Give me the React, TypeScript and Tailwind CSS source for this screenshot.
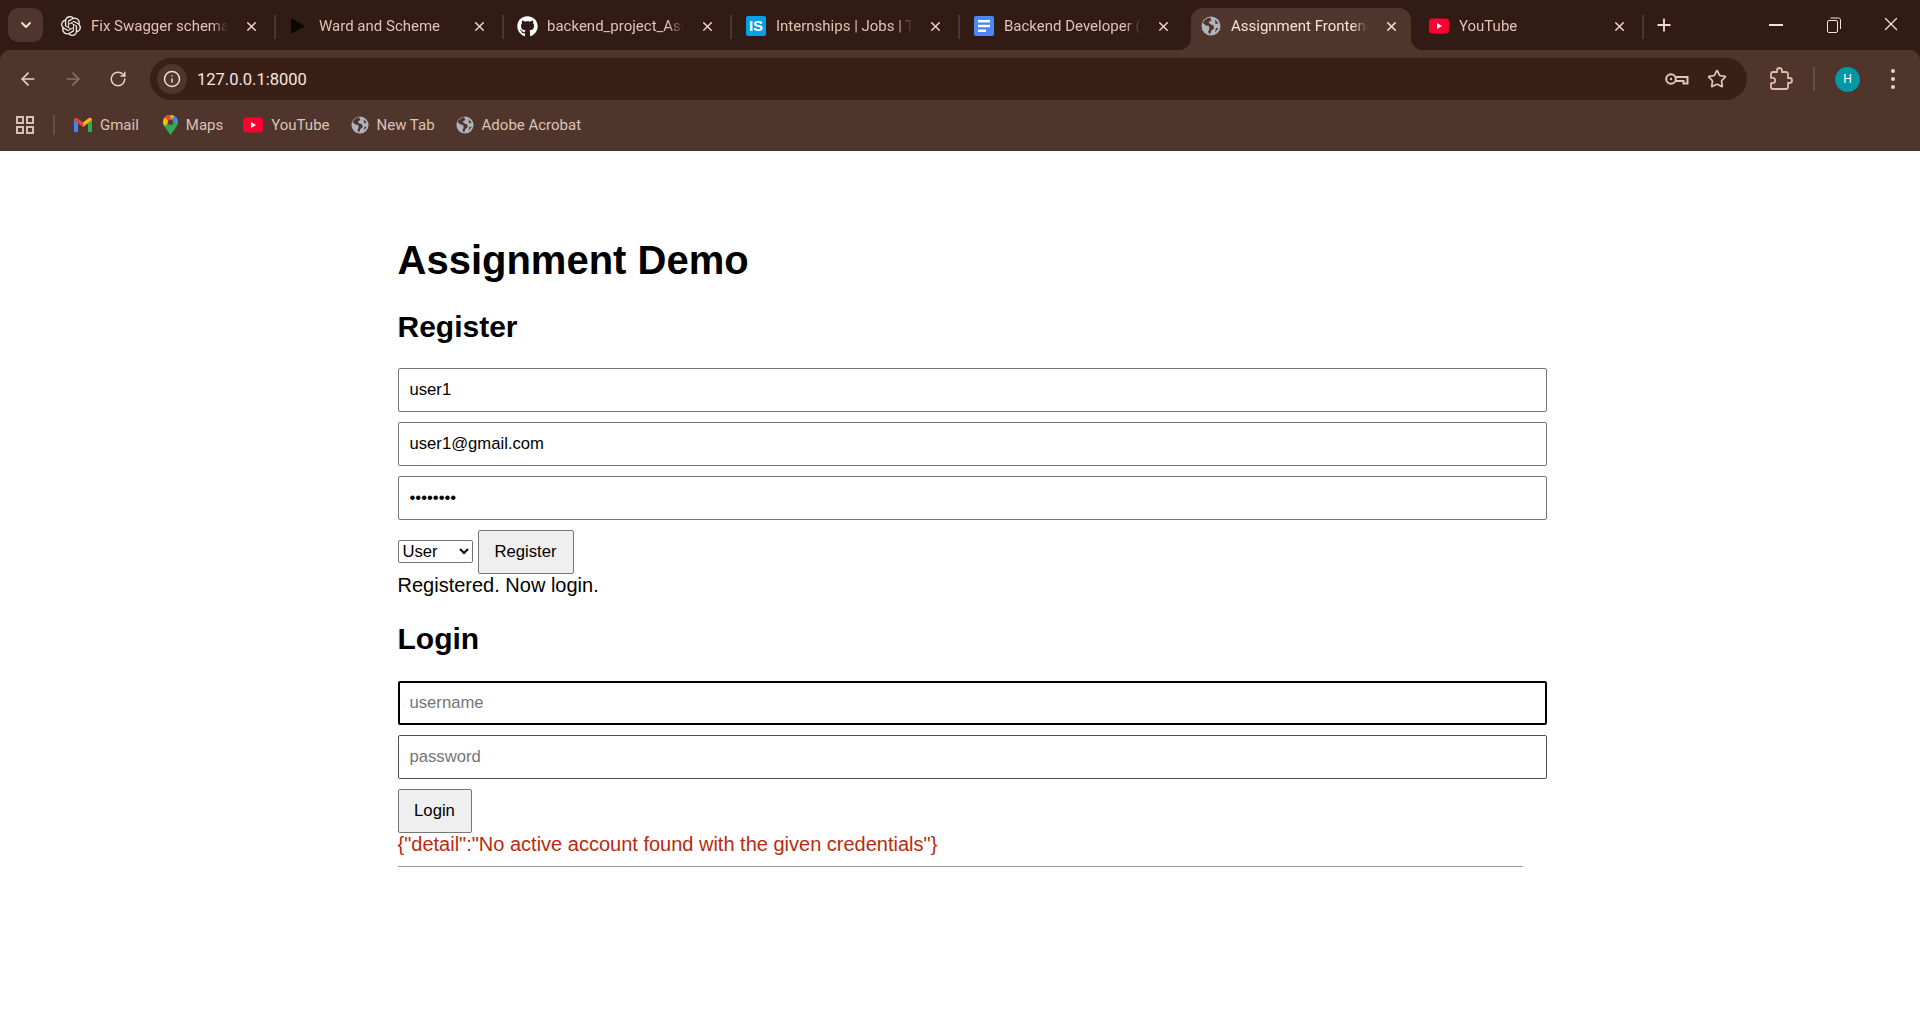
import React from 'react';
import { ArrowLeft, ArrowRight, RotateCw, Info, Star, Plus, X, ChevronDown } from 'lucide-react';
import { FaGithub } from 'react-icons/fa';
import { SiOpenai } from 'react-icons/si';

const Globe = ({ size = 20 }: { size?: number }) => (
  <svg width={size} height={size} viewBox="0 0 20 20" className="shrink-0">
    <circle cx="10" cy="10" r="9.5" fill="#aeb4ba" />
    <path d="M9 1.5 C5.5 2 3 4 1.8 7 L5 9.5 L8 10 L8.5 13 L7 16 L9 18.3 L10.5 14.5 L13 12.5 L12.5 9.5 L9 8 L7.5 6 L10.5 4.5 Z" fill="#4f352b" />
    <path d="M14 3.5 L17.5 7.5 L14.5 8 Z M15 12 L17.5 12 L14 16.5 Z" fill="#4f352b" />
  </svg>
);

const YouTubeIcon = () => (
  <svg width="20" height="20" viewBox="0 0 20 20" className="shrink-0">
    <rect x="0" y="2.5" width="20" height="15" rx="3.5" fill="#ff0033" />
    <path d="M8 7 L13 10 L8 13 Z" fill="#fff" />
  </svg>
);

const PlayIcon = () => (
  <svg width="20" height="20" viewBox="0 0 20 20" className="shrink-0">
    <path d="M2 2 L16 10 L2 18 Z" fill="#0b0705" />
  </svg>
);

const InternshalaIcon = () => (
  <div className="w-5 h-[20px] shrink-0 rounded-[2px] bg-[#03a1e6] text-white text-[15px] font-bold leading-[20px] text-center font-['Liberation_Sans',sans-serif]">
    IS
  </div>
);

const DocsIcon = () => (
  <svg width="20" height="20" viewBox="0 0 20 20" className="shrink-0">
    <rect x="0" y="0" width="20" height="20" rx="2" fill="#4d86f5" />
    <rect x="4" y="4" width="12" height="2.4" fill="#fff" />
    <rect x="4" y="8.8" width="12" height="2.4" fill="#fff" />
    <rect x="4" y="13.6" width="8" height="2.4" fill="#fff" />
  </svg>
);

const GmailIcon = () => (
  <svg width="18" height="16" viewBox="0 0 18 16" className="shrink-0">
    <path d="M0 3 L0 15 L4 15 L4 6 Z" fill="#4285f4" />
    <path d="M14 6 L14 15 L18 15 L18 3 Z" fill="#34a853" />
    <path d="M0 3 C0 1 2 0 3.5 1.2 L9 5.5 L9 10 L0 3 Z" fill="#ea4335" />
    <path d="M9 5.5 L14.5 1.2 C16 0 18 1 18 3 L9 10 Z" fill="#f9bc15" />
  </svg>
);

const MapsIcon = () => (
  <svg width="15" height="20" viewBox="0 0 15 20" className="shrink-0">
    <path d="M7.5 0 C3.4 0 0 3.2 0 7.3 C0 8.9 .6 10.2 1.4 11.4 L7.5 20 L13.6 11.4 C14.4 10.2 15 8.9 15 7.3 C15 3.2 11.6 0 7.5 0 Z" fill="#34a853" />
    <path d="M2 2.3 C3.3 .9 5.3 0 7.5 0 C9 0 10.4 .5 11.6 1.2 L2 11 C.7 10 0 8.9 0 7.3 C0 5 .8 3.4 2 2.3 Z" fill="#fbbc04" />
    <path d="M2 2.3 C3.3 .9 5.3 0 7.5 0 L7.5 4.5 L4.8 5.5 Z" fill="#ea4335" />
    <path d="M11.6 1.2 C13.6 2.4 15 4.7 15 7.3 L10.2 7 L7.5 4.5 Z" fill="#4285f4" />
    <circle cx="7.5" cy="7.3" r="2.7" fill="#5b3a2a" />
  </svg>
);

const AppsIcon = () => (
  <svg width="18" height="18" viewBox="0 0 18 18" fill="none" stroke="#d9bfb3" strokeWidth="2" className="shrink-0">
    <rect x="1" y="1" width="6" height="6" />
    <rect x="11" y="1" width="6" height="6" />
    <rect x="1" y="11" width="6" height="6" />
    <rect x="11" y="11" width="6" height="6" />
  </svg>
);

const KeyIcon = () => (
  <svg width="24" height="14" viewBox="0 0 24 14" fill="none" stroke="#e3c6ba" strokeWidth="2" className="shrink-0">
    <circle cx="6" cy="7" r="4.8" />
    <circle cx="6" cy="7" r="1.2" fill="#e3c6ba" stroke="none" />
    <path d="M10.6 5 H22.5 V11.5 H18.5 V9 H10.6" />
  </svg>
);

const PuzzleIcon = () => (
  <svg width="24" height="24" viewBox="0 0 24 24" fill="none" stroke="#e3b9a8" strokeWidth="1.8" className="shrink-0">
    <path d="M20.5 11H19V7c0-1.1-.9-2-2-2h-4V3.5C13 2.12 11.88 1 10.5 1S8 2.12 8 3.5V5H4c-1.1 0-1.99.9-1.99 2v3.8H3.5c1.49 0 2.7 1.21 2.7 2.7s-1.21 2.7-2.7 2.7H2V20c0 1.1.9 2 2 2h13c1.1 0 2-.9 2-2v-4h1.5c1.38 0 2.5-1.12 2.5-2.5S21.88 11 20.5 11z" />
  </svg>
);

const RestoreIcon = () => (
  <svg width="14" height="16" viewBox="0 0 14 16" fill="none" stroke="#f3e4dc" strokeWidth="1" className="shrink-0">
    <rect x="0.5" y="3.5" width="10" height="12" rx="1.5" />
    <path d="M3.5 1 H11.5 C12.6 1 13.5 1.9 13.5 3 V12" />
  </svg>
);

const tabs = [
  { title: 'Fix Swagger schema error', icon: <SiOpenai size={20} color="#f5f0ee" className="shrink-0" /> },
  { title: 'Ward and Scheme', icon: <PlayIcon /> },
  { title: 'backend_project_Assignment', icon: <FaGithub size={21} color="#fff" className="shrink-0" /> },
  { title: 'Internships | Jobs | Training', icon: <InternshalaIcon />, nudge: true },
  { title: 'Backend Developer (Intern)', icon: <DocsIcon />, nudge: true },
  { title: 'Assignment Frontend', icon: <Globe />, active: true },
  { title: 'YouTube', icon: <YouTubeIcon /> },
];

const bookmarks = [
  { label: 'Gmail', icon: <GmailIcon />, className: 'ml-[19px]' },
  { label: 'Maps', icon: <MapsIcon />, className: 'ml-[24px]' },
  { label: 'YouTube', icon: <YouTubeIcon />, className: 'ml-[20px]' },
  { label: 'New Tab', icon: <Globe size={18} />, className: 'ml-[21px]' },
  { label: 'Adobe Acrobat', icon: <Globe size={18} />, className: 'ml-[21px]' },
];

const Tab = ({ title, icon, active, nudge }: { title: string; icon: React.ReactNode; active?: boolean; nudge?: boolean }) => (
  <div className="flex items-center h-[42px] w-[228px] shrink-0 relative">
    {active && (
      <>
        <div className="absolute left-[-8px] bottom-0 w-[12px] h-[42px] bg-[#4f352b]">
          <div className="w-[12px] h-[42px] bg-[#321b14] rounded-br-[12px]"></div>
        </div>
        <div className="absolute right-[-8px] bottom-0 w-[12px] h-[42px] bg-[#4f352b]">
          <div className="w-[12px] h-[42px] bg-[#321b14] rounded-bl-[12px]"></div>
        </div>
        <div className="absolute left-[4px] right-[4px] top-0 bottom-0 bg-[#4f352b] rounded-t-[12px]"></div>
      </>
    )}
    <div className={`relative flex items-center w-full h-full pb-[6px] ${nudge ? 'pl-[15px]' : 'pl-[14px]'}`}>
      <div className="w-5 flex justify-center shrink-0">{icon}</div>
      <div className={`ml-[10px] w-[137px] overflow-hidden whitespace-nowrap text-[15px] [mask-image:linear-gradient(to_right,black_88%,transparent)] ${active ? 'text-[#f5e2d9]' : 'text-[#e3c2b4]'}`}>
        {title}
      </div>
      <X size={15} strokeWidth={2.4} className={`shrink-0 ${nudge ? 'ml-[15px]' : 'ml-[16px]'} ${active ? 'text-[#f7e6de]' : 'text-[#efd3c6]'}`} />
    </div>
    {!active && <div className="absolute right-[-1px] top-[7px] w-[2px] h-[24px] bg-[#4f352b]"></div>}
  </div>
);

export default function App() {
  return (
    <div className="h-screen overflow-hidden bg-white flex flex-col">
      {/* browser chrome */}
      <div className="bg-[#321b14] font-[Roboto,sans-serif]">
        <div className="flex h-[50px] items-start">
          <div className="ml-[8px] mt-[8px] w-[35px] h-[34px] rounded-[10px] bg-[#4f352b] flex items-center justify-center shrink-0">
            <ChevronDown size={16} strokeWidth={3} className="text-[#f0ddd3]" />
          </div>
          <div className="flex ml-[4px] mt-[8px]">
            {tabs.map((t, i) => (
              <Tab key={i} title={t.title} icon={t.icon} active={t.active} nudge={t.nudge} />
            ))}
          </div>
          <Plus size={20} strokeWidth={2.2} className="ml-[11px] mt-[15px] text-[#f5d9cc] shrink-0" />
          <div className="ml-[95px] mt-[24px] w-[14px] h-[1.5px] bg-[#f3e4dc] shrink-0"></div>
          <div className="ml-[44px] mt-[17px]"><RestoreIcon /></div>
          <X size={22} strokeWidth={1.3} className="ml-[39px] mt-[13px] text-[#f3e4dc] shrink-0" />
        </div>

        <div className="bg-[#4f352b] rounded-t-[10px] h-[101px]">
          <div className="flex items-center h-[50px] pt-[8px] pl-[5px]">
            <div className="w-[45px] flex justify-center"><ArrowLeft size={20} strokeWidth={2} className="text-[#eccfc2]" /></div>
            <div className="w-[45px] flex justify-center"><ArrowRight size={20} strokeWidth={2} className="text-[#8e7266]" /></div>
            <div className="w-[45px] flex justify-center"><RotateCw size={18} strokeWidth={2} className="text-[#eccfc2]" /></div>
            <div className="ml-[10px] w-[1597px] h-[42px] rounded-full bg-[#3a1f17] flex items-center pl-[7px] pr-[20px]">
              <div className="w-[30px] h-[30px] rounded-full bg-[#4f352b] flex items-center justify-center">
                <Info size={18} strokeWidth={2} className="text-[#f0ddd3]" />
              </div>
              <div className="ml-[10px] pt-[2px] text-[16.5px] text-[#f7e7df] flex-1">127.0.0.1:8000</div>
              <KeyIcon />
              <Star size={20} strokeWidth={2} className="ml-[18px] text-[#e3c6ba]" />
            </div>
            <div className="ml-[22px]"><PuzzleIcon /></div>
            <div className="ml-[20px] w-[2px] h-[24px] bg-[#6a4d41]"></div>
            <div className="ml-[20px] w-[25px] h-[25px] rounded-full bg-[#0097a7] text-white text-[12px] flex items-center justify-center">H</div>
            <div className="ml-[31px] flex flex-col gap-[4px]">
              <div className="w-[4px] h-[4px] rounded-full bg-[#eccfc2]"></div>
              <div className="w-[4px] h-[4px] rounded-full bg-[#eccfc2]"></div>
              <div className="w-[4px] h-[4px] rounded-full bg-[#eccfc2]"></div>
            </div>
          </div>
          <div className="flex items-center h-[50px] pl-[16px]">
            <AppsIcon />
            <div className="ml-[19px] w-[2px] h-[20px] bg-[#6a4d41]"></div>
            {bookmarks.map(b => (
              <div key={b.label} className={`flex items-center gap-[8px] text-[15px] text-[#dcc3b8] ${b.className}`}>
                {b.icon}
                <span>{b.label}</span>
              </div>
            ))}
          </div>
        </div>
      </div>

      {/* page */}
      <div className="w-[1125px] mx-auto pt-[86px] font-['Liberation_Sans',Arial,sans-serif] text-black">
        <h1 className="text-[40px] leading-[46px] font-bold">Assignment Demo</h1>

        <h2 className="mt-[27px] text-[30px] leading-[34px] font-bold">Register</h2>
        <div className="mt-[24px] flex flex-col gap-[10px]">
          <input readOnly value="user1" className="w-[calc(100%+24px)] h-[44px] pl-[11px] pb-[1px] border border-[#767676] rounded-[2px] text-[16.67px] outline-none" />
          <input readOnly value="user1@gmail.com" className="w-[calc(100%+24px)] h-[44px] pl-[11px] pb-[1px] border border-[#767676] rounded-[2px] text-[16.67px] outline-none" />
          <input readOnly type="password" value="password" className="w-[calc(100%+24px)] h-[44px] pl-[11px] pb-[1px] border border-[#767676] rounded-[2px] text-[16.67px] outline-none" />
        </div>
        <div className="mt-[10px] flex items-center gap-[5px]">
          <select className="w-[75px] h-[23px] mb-[1px] border border-[#767676] rounded-[2px] bg-white text-[16.67px] leading-[20px] appearance-auto">
            <option>User</option>
          </select>
          <button className="w-[96px] h-[44px] pb-[1px] border border-[#767676] rounded-[2px] bg-[#efefef] text-[16.67px]">Register</button>
        </div>
        <p className="text-[20px] leading-[23px]">Registered. Now login.</p>

        <h2 className="mt-[25px] text-[30px] leading-[34px] font-bold">Login</h2>
        <div className="mt-[25px] flex flex-col gap-[10px]">
          <input readOnly placeholder="username" className="w-[calc(100%+24px)] h-[44px] pl-[10px] pb-[1px] border-2 border-black rounded-[2px] text-[16.67px] outline-none placeholder:text-[#757575]" />
          <input readOnly placeholder="password" className="w-[calc(100%+24px)] h-[44px] pl-[11px] pb-[1px] border border-[#4f4f4f] rounded-[2px] text-[16.67px] outline-none placeholder:text-[#757575]" />
        </div>
        <button className="mt-[10px] block w-[74px] h-[44px] pb-[1px] border border-[#767676] rounded-[2px] bg-[#efefef] text-[16.67px]">Login</button>
        <p className="text-[20px] leading-[23px] text-[#b92a0e]">{'{"detail":"No active account found with the given credentials"}'}</p>
        <hr className="mt-[10px] border-t border-[#999999]" />
      </div>
    </div>
  );
}
